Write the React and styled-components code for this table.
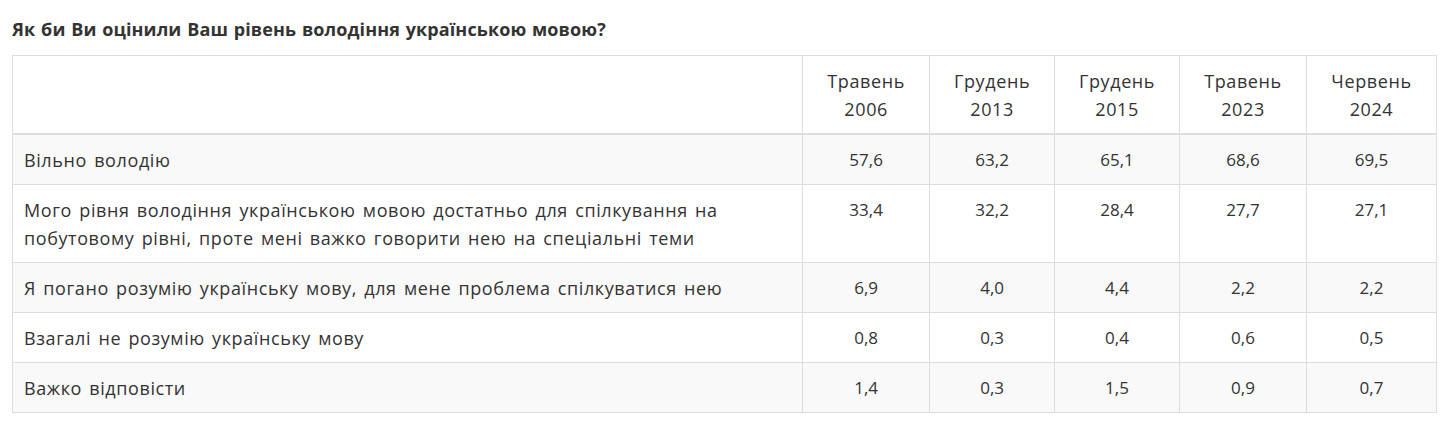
import React from 'react';
import styled, { createGlobalStyle } from 'styled-components';

const GlobalStyle = createGlobalStyle`
  body {
    margin: 0;
    background: #ffffff;
    font-family: 'Open Sans', 'Noto Sans', sans-serif;
    color: #333333;
  }
`;

const Page = styled.div`
  padding: 16px 16px 0 12px;
`;

const Title = styled.h3`
  margin: 0 0 13px;
  font-size: 18px;
  line-height: 26px;
  font-weight: 700;
  letter-spacing: 0.1px;
  word-spacing: 1px;
  color: #333333;
`;

const Table = styled.table`
  width: 100%;
  border-collapse: collapse;
  border: 1px solid #dddddd;
  font-size: 18px;
  line-height: 28px;
  letter-spacing: 0.6px;
  word-spacing: 2px;
`;

const HeadCell = styled.th`
  font-weight: 400;
  text-align: center;
  vertical-align: top;
  padding: 11px 11px 10px;
  border: 1px solid #dddddd;
  border-bottom: 2px solid #dddddd;
  width: ${p => p.$w || 'auto'};
`;

const Row = styled.tr`
  background: ${p => (p.$striped ? '#f9f9f9' : '#ffffff')};
`;

const LabelCell = styled.td`
  padding: 11px 11px 10px;
  border: 1px solid #dddddd;
  vertical-align: top;
`;

const NumCell = styled.td`
  padding: 11px 11px 10px;
  border: 1px solid #dddddd;
  vertical-align: top;
  text-align: center;
  font-size: 17px;
  letter-spacing: 0;
`;

const columns = [
  ['Травень', '2006', '104px'],
  ['Грудень', '2013', '102px'],
  ['Грудень', '2015', '102px'],
  ['Травень', '2023', '104px'],
  ['Червень', '2024', '107px'],
];

const rows = [
  ['Вільно володію', ['57,6', '63,2', '65,1', '68,6', '69,5']],
  [
    'Мого рівня володіння українською мовою достатньо для спілкування на побутовому рівні, проте мені важко говорити нею на спеціальні теми',
    ['33,4', '32,2', '28,4', '27,7', '27,1'],
  ],
  ['Я погано розумію українську мову, для мене проблема спілкуватися нею', ['6,9', '4,0', '4,4', '2,2', '2,2']],
  ['Взагалі не розумію українську мову', ['0,8', '0,3', '0,4', '0,6', '0,5']],
  ['Важко відповісти', ['1,4', '0,3', '1,5', '0,9', '0,7']],
];

export default function App() {
  return (
    <>
      <GlobalStyle />
      <Page>
        <Title>Як би Ви оцінили Ваш рівень володіння українською мовою?</Title>
        <Table>
          <thead>
            <tr>
              <HeadCell $w="768px" />
              {columns.map(([month, year, w]) => (
                <HeadCell key={month + year} $w={w}>
                  {month}
                  <br />
                  {year}
                </HeadCell>
              ))}
            </tr>
          </thead>
          <tbody>
            {rows.map(([label, values], i) => (
              <Row key={label} $striped={i % 2 === 0}>
                <LabelCell>{label}</LabelCell>
                {values.map((v, j) => (
                  <NumCell key={j}>{v}</NumCell>
                ))}
              </Row>
            ))}
          </tbody>
        </Table>
      </Page>
    </>
  );
}
